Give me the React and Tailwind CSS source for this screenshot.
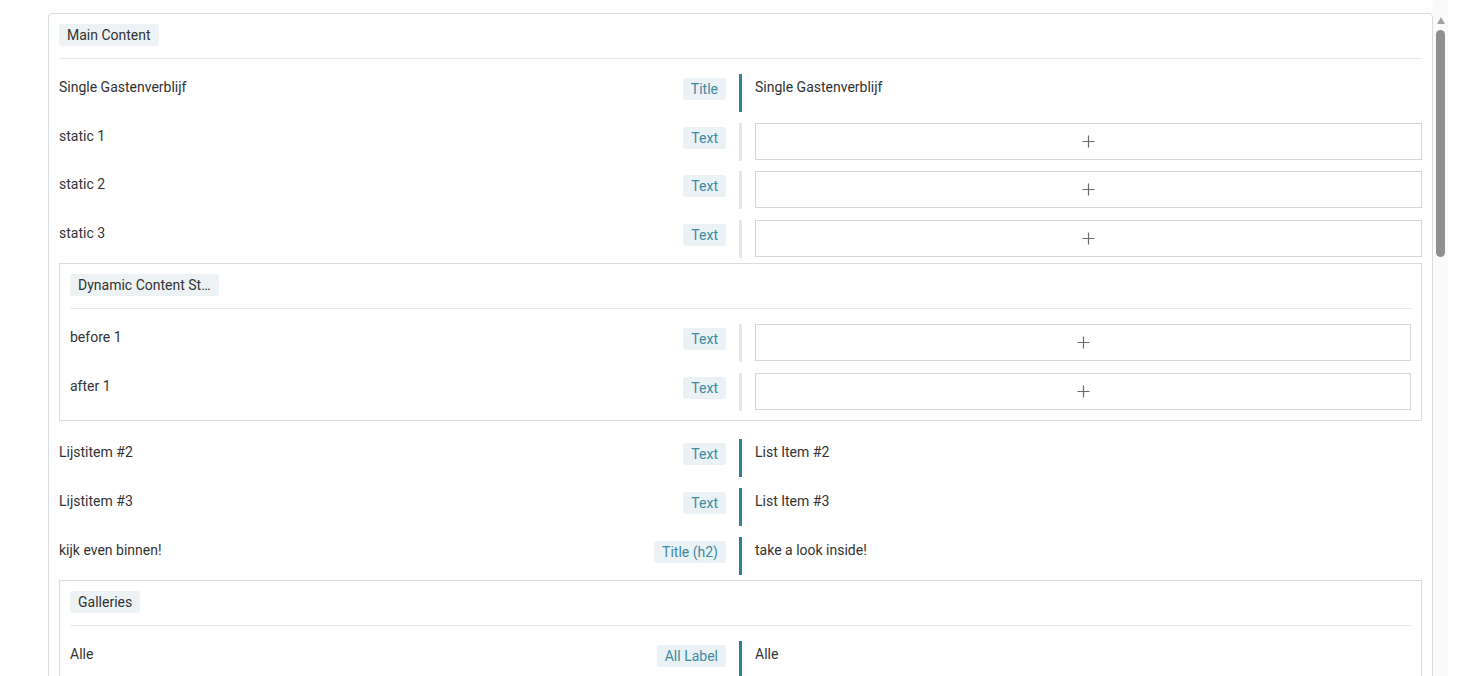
import React from "react";

const font = { fontFamily: "Roboto, 'Noto Sans', sans-serif" };

function Plus() {
  return (
    <svg width="13" height="13" viewBox="0 0 13 13" className="block">
      <path d="M6.5 0.5v12M0.5 6.5h12" stroke="#6b6b6b" strokeWidth="1.2" fill="none" />
    </svg>
  );
}

function Badge({ children }) {
  return (
    <span className="block h-[22px] leading-[22px] px-[8px] rounded-[3px] bg-[#eaf2f5] text-[#3f8aa0] text-[14px] whitespace-nowrap">
      {children}
    </span>
  );
}

function Row({ label, type, value }) {
  const filled = value !== undefined;
  return (
    <div className="py-[5.33px]">
      <div className="grid grid-cols-[calc(50%-1.5px)_1fr] h-[38px]">
        <div className="flex justify-between items-start pr-[13px]">
          <span className="block pt-[3px] leading-[20px] text-[14px] text-[#333]">{label}</span>
          <div className="flex pt-[4px]">
            <Badge>{type}</Badge>
          </div>
        </div>
        <div
          className={
            "border-l-[3px] pl-[13px] " +
            (filled ? "border-[#2e8198]" : "border-[#e6e6e6]")
          }
        >
          {filled ? (
            <div className="pt-[3px] leading-[20px] text-[14px] text-[#333]">{value}</div>
          ) : (
            <div className="h-[37px] border border-[#d6d6d6] flex items-center justify-center bg-white">
              <Plus />
            </div>
          )}
        </div>
      </div>
    </div>
  );
}

function Header({ title }) {
  return (
    <div className="flex pb-[12px] border-b border-[#e6e9eb]">
      <span className="block h-[22px] leading-[22px] px-[8px] rounded-[3px] bg-[#edf2f4] text-[#333] text-[14px]">
        {title}
      </span>
    </div>
  );
}

function SubCard({ title, children, className = "" }) {
  return (
    <div className={"border border-[#d3dde2] pt-[10px] px-[10px] pb-[4px] " + className}>
      <Header title={title} />
      <div className="pt-[9.67px]">{children}</div>
    </div>
  );
}

export default function App() {
  return (
    <div className="w-[1473px] h-[676px] overflow-hidden bg-white flex" style={font}>
      <div className="w-[1433px] h-[676px] overflow-hidden pl-[48px] pt-[13px]">
        <div className="border border-[#d9dde0] rounded-[4px] pt-[10px] px-[10px] pb-[10px]">
          <Header title="Main Content" />
          <div className="pt-[9.67px]">
            <Row label="Single Gastenverblijf" type="Title" value="Single Gastenverblijf" />
            <Row label="static 1" type="Text" />
            <Row label="static 2" type="Text" />
            <Row label="static 3" type="Text" />
            <SubCard title="Dynamic Content St…" className="mb-[12.67px]">
              <Row label="before 1" type="Text" />
              <Row label="after 1" type="Text" />
            </SubCard>
            <Row label="Lijstitem #2" type="Text" value="List Item #2" />
            <Row label="Lijstitem #3" type="Text" value="List Item #3" />
            <Row label="kijk even binnen!" type="Title (h2)" value="take a look inside!" />
            <SubCard title="Galleries">
              <Row label="Alle" type="All Label" value="Alle" />
            </SubCard>
          </div>
        </div>
      </div>
      <div className="w-[15px] h-[676px] bg-[#fafafa] flex flex-col items-center">
        <div className="mt-[17px] w-0 h-0 border-l-[4px] border-r-[4px] border-b-[7px] border-l-transparent border-r-transparent border-b-[#a3a3a3]" />
        <div className="mt-[6px] w-[9px] h-[227px] rounded-full bg-[#8f8f8f]" />
      </div>
    </div>
  );
}
